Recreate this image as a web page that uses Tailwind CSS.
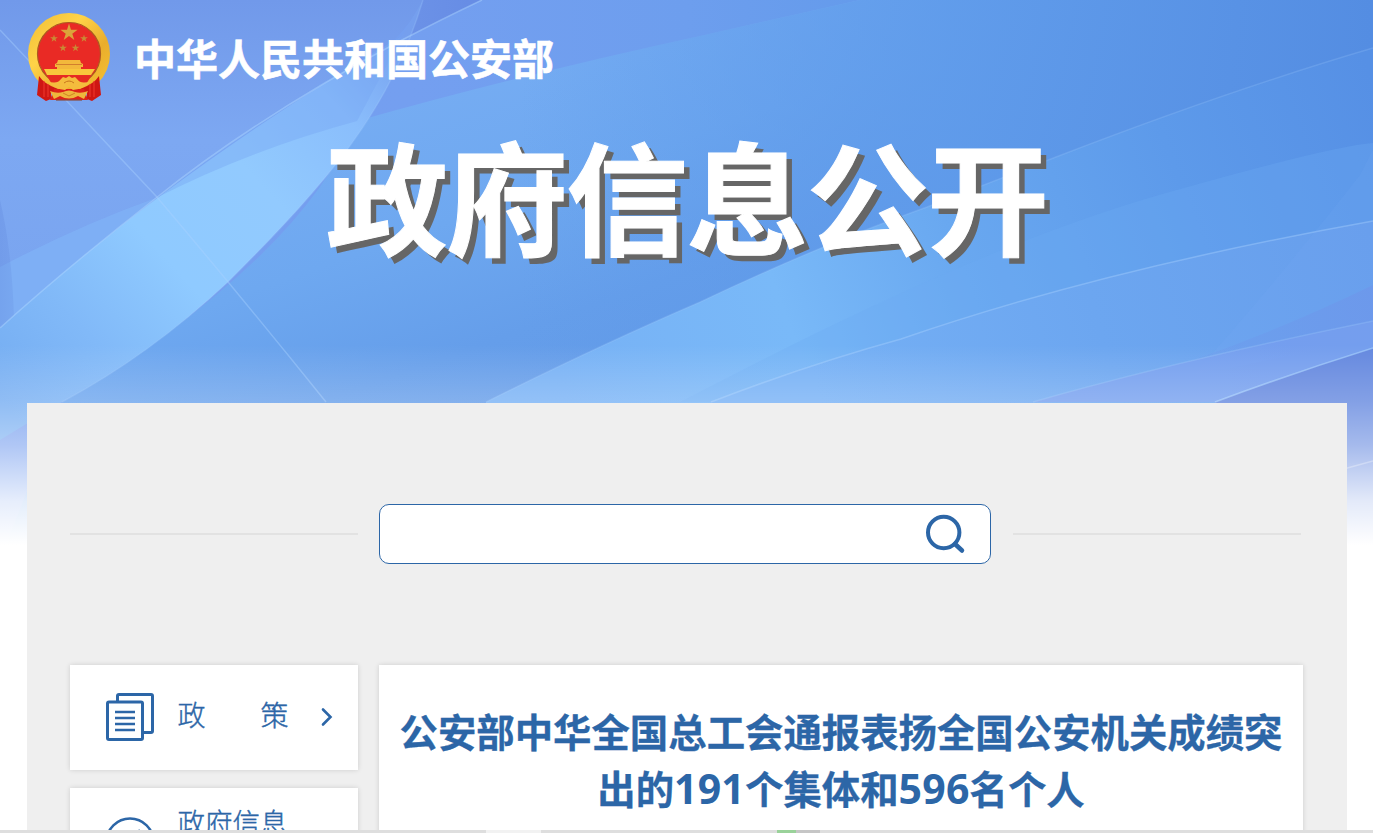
<!DOCTYPE html>
<html lang="zh-CN">
<head>
<meta charset="utf-8">
<title>政府信息公开</title>
<script src="https://cdn.jsdelivr.net/npm/@tailwindcss/browser@4"></script>
</head>
<body class="bg-white">
<div class="relative isolate flex h-[833px] w-[1373px] flex-col overflow-hidden font-['Noto_Sans_CJK_SC',sans-serif]">

  <!-- banner artwork behind the page -->
  <svg class="absolute top-0 left-0 -z-10" width="1373" height="560" viewBox="0 0 1373 560" fill="none">
    <defs>
      <linearGradient id="base" x1="0" y1="0" x2="1373" y2="0" gradientUnits="userSpaceOnUse">
        <stop offset="0" stop-color="#769eee"/><stop offset=".3" stop-color="#749ff0"/><stop offset=".5" stop-color="#6d9eee"/><stop offset=".75" stop-color="#5c98e9"/><stop offset="1" stop-color="#538ce1"/>
      </linearGradient>
      <linearGradient id="beam" x1="0" y1="400" x2="400" y2="30" gradientUnits="userSpaceOnUse">
        <stop offset="0" stop-color="#74acf1"/><stop offset=".2" stop-color="#81b9f8"/><stop offset=".4" stop-color="#8fcaff"/><stop offset=".62" stop-color="#92cafe"/><stop offset=".82" stop-color="#8abefc"/><stop offset="1" stop-color="#759fee"/>
      </linearGradient>
      <linearGradient id="mid" x1="420" y1="60" x2="540" y2="400" gradientUnits="userSpaceOnUse">
        <stop offset="0" stop-color="#77adf3"/><stop offset=".45" stop-color="#6ea8f0"/><stop offset=".8" stop-color="#659eea"/><stop offset="1" stop-color="#639be8"/>
      </linearGradient>
      <linearGradient id="midx" x1="520" y1="0" x2="1373" y2="0" gradientUnits="userSpaceOnUse">
        <stop offset="0" stop-color="#5e9aea" stop-opacity="0"/><stop offset=".5" stop-color="#5e9aea" stop-opacity=".85"/><stop offset="1" stop-color="#548de2"/>
      </linearGradient>
      <linearGradient id="low" x1="560" y1="380" x2="1373" y2="80" gradientUnits="userSpaceOnUse">
        <stop offset="0" stop-color="#77b1f5"/><stop offset=".27" stop-color="#79b9f8"/><stop offset=".48" stop-color="#69a8f0"/><stop offset=".75" stop-color="#5d9aea"/><stop offset="1" stop-color="#5690e5"/>
      </linearGradient>
      <linearGradient id="low2" x1="820" y1="400" x2="1373" y2="240" gradientUnits="userSpaceOnUse">
        <stop offset="0" stop-color="#75b0f5"/><stop offset=".5" stop-color="#6ca6f0"/><stop offset="1" stop-color="#679eec"/>
      </linearGradient>
      <linearGradient id="left" x1="0" y1="0" x2="0" y2="400" gradientUnits="userSpaceOnUse">
        <stop offset="0" stop-color="#7199ea"/><stop offset=".35" stop-color="#7da8f2"/><stop offset="1" stop-color="#77a2ee"/>
      </linearGradient>
      <linearGradient id="edge" x1="0" y1="0" x2="40" y2="0" gradientUnits="userSpaceOnUse">
        <stop offset="0" stop-color="#6087dc" stop-opacity=".3"/><stop offset="1" stop-color="#6087dc" stop-opacity="0"/>
      </linearGradient>
      <linearGradient id="dark" x1="380" y1="0" x2="470" y2="0" gradientUnits="userSpaceOnUse">
        <stop offset="0" stop-color="#6e94e8"/><stop offset="1" stop-color="#678de5"/>
      </linearGradient>
      <linearGradient id="violet" x1="1130" y1="350" x2="1373" y2="300" gradientUnits="userSpaceOnUse">
        <stop offset="0" stop-color="#6b98eb" stop-opacity=".1"/><stop offset="1" stop-color="#6b96ea" stop-opacity=".9"/>
      </linearGradient>
      <linearGradient id="fade" x1="0" y1="345" x2="0" y2="545" gradientUnits="userSpaceOnUse">
        <stop offset="0" stop-color="#fff" stop-opacity="0"/><stop offset=".28" stop-color="#fff" stop-opacity=".2"/><stop offset=".5" stop-color="#fff" stop-opacity=".42"/><stop offset=".78" stop-color="#fff" stop-opacity=".82"/><stop offset="1" stop-color="#fff"/>
      </linearGradient>
    </defs>
    <rect width="1373" height="560" fill="url(#base)"/>
    <path d="M0 0H423Q395 60 290 107Q150 195 0 328Z" fill="url(#left)"/>
    <path d="M0 267Q80 225 156 198L0 328Z" fill="#80b1f6" fill-opacity=".8"/>
    <path d="M0 200Q12 250 14 318L0 328Z" fill="url(#edge)"/>
    <path d="M423 0H482L402 40Z" fill="url(#dark)"/>
    <path d="M357 121Q520 75 700 36L860 0H1373V560H0L62 402Q300 260 357 121Z" fill="url(#mid)"/>
    <path d="M357 121Q520 75 700 36L860 0H1373V560H0L62 402Q300 260 357 121Z" fill="url(#midx)"/>
    <path d="M0 328C130 210 260 120 402 36L423 0C390 110 330 180 228 282Q150 355 62 402L0 440Z" fill="url(#beam)"/>
    <path d="M156 198Q250 150 357 121L402 36Q260 115 156 198Z" fill="#76a4f2" fill-opacity=".4"/>
    <path d="M486 402Q600 345 700 302Q820 245 927 207L1056 157Q1230 90 1373 48V560H486Z" fill="url(#low)"/>
    <path d="M768 357Q1000 240 1166 193T1373 143V221Q1100 275 901 339L711 402H680Z" fill="#6dabf2" fill-opacity=".32"/>
    <path d="M711 402Q810 364 901 339Q1100 270 1373 221V560H711Z" fill="url(#low2)"/>
    <path d="M1193 360Q1280 330 1373 285V350L1215 402H1033Z" fill="url(#violet)"/>
    <path d="M1360 175Q1270 290 1193 375L1373 340V150Z" fill="#79aef5" fill-opacity=".12"/>
    <path d="M1033 402Q1180 360 1373 321V402Z" fill="#769fee" fill-opacity=".9"/>
    <path d="M1215 402Q1290 374 1373 348V560H1215Z" fill="#6488df"/>
    <g stroke="#a9d3ff" stroke-width="1.500">
      <path d="M482 0Q440 20 402 40Q260 115 156 198Q70 265 0 328" stroke-opacity=".5"/>
      <path d="M0 30Q80 115 156 196Q240 295 326 402" stroke-opacity=".4"/>
      <path d="M423 0C390 110 330 180 228 282Q150 355 62 402" stroke-opacity=".2"/>
      <path d="M486 402Q600 345 700 302Q820 245 927 207L1056 157Q1230 90 1373 48" stroke-opacity=".2"/>
      <path d="M711 402Q810 364 901 339Q1100 270 1373 221" stroke-opacity=".4"/>
      <path d="M1033 402Q1180 360 1373 321" stroke-opacity=".25"/>
      <path d="M1215 402Q1290 374 1373 348" stroke-opacity=".6"/>
      <path d="M1340 470L1373 461" stroke="#fff" stroke-opacity=".3"/>
    </g>
    <rect y="345" width="1373" height="215" fill="url(#fade)"/>
  </svg>

  <header class="flex h-[403px] flex-none flex-col">
    <div class="flex pt-3 pl-[27px]">
      <svg width="84" height="91" viewBox="0 0 84 91">
        <defs><linearGradient id="gold" x1="0" y1="0" x2="1" y2="1"><stop offset="0" stop-color="#efbd35"/><stop offset=".35" stop-color="#ffd348"/><stop offset=".65" stop-color="#e9ad2c"/><stop offset="1" stop-color="#f8c535"/></linearGradient></defs>
        <ellipse cx="42" cy="42" rx="41" ry="41" fill="url(#gold)"/>
        <ellipse cx="42" cy="42" rx="31.500" ry="31.500" fill="#e92a25" stroke="#ad5a20" stroke-width="1.200"/>
        <path d="M42 11.500l2 6.300h6.600l-5.300 3.900 2 6.300-5.300-3.900-5.300 3.900 2-6.300-5.300-3.900h6.600z" fill="#dba43a"/>
        <g fill="#c98a35">
          <path id="st" d="M27 22.500l.9 2.700h3l-2.400 1.700.9 2.800-2.400-1.700-2.400 1.700.9-2.800-2.400-1.700h3z"/>
          <use href="#st" x="30"/><use href="#st" x="9" y="9.500"/><use href="#st" x="21.500" y="9.500"/>
        </g>
        <path d="M31 48h22l1 3 2 1v3h-2v2H30v-2h-2v-3l2-1z" fill="#f3b83b"/>
        <path d="M29 52.500h26" stroke="#c9702a" stroke-width=".8"/>
        <path d="M17 57h51l-4 6H20z" fill="#f8c73c"/>
        <path d="M20 64h44l-6 10H26z" fill="#e52a21"/>
        <path d="M12 64Q17 72 31 77l-1 4-6-1v7l-5 2-9-6z" fill="#cf1713"/>
        <path d="M72 64Q67 72 53 77l1 4 6-1v7l5 2 9-6z" fill="#cf1713"/>
        <path d="M17 69v16M21 72v13M67 69v16M63 72v13" stroke="#ef3a2f" stroke-width="1"/>
        <path d="M27 77h30l4 11H23z" fill="#dd2119"/>
        <path d="M20 69q10 4 14-2l2-2 3 1 3-2 3 2 3-1 2 2q4 6 14 2-6 8-18 9l-4-3-4 3q-12-1-18-9z" fill="#f4bc3d"/>
        <path d="M37 71q5-4 10 0" fill="none" stroke="#c7751d" stroke-width="1"/>
        <path d="M23 79q7 3 13 1 6-3 12 0 6 2 13-1l-4 8-6-3q-9 5-18 0l-6 3z" fill="#eeb63c"/>
        <path d="M36 81l6 3 6-3" fill="none" stroke="#c7751d" stroke-width=".8"/>
        <path d="M29 88h26" stroke="#8c4a3c" stroke-width="1.200"/>
      </svg>
      <p class="mt-[15px] ml-[23px] text-[42px] leading-[60px] font-bold text-white [-webkit-text-stroke:0.6px_#fff]">中华人民共和国公安部</p>
    </div>
    <h1 class="text-center text-[122px] leading-[180px] font-bold tracking-[-1.800px] text-white [-webkit-text-stroke:1px_#fff] [text-shadow:6px_6px_0_#666]">政府信息公开</h1>
  </header>

  <main class="mx-auto flex w-[1320px] flex-1 flex-col bg-[#efefef] px-[43px] pt-[101px]">
    <div class="flex h-[60px] flex-none items-center">
      <div class="h-0.5 w-[288px] bg-[#e2e2e2]"></div>
      <div class="mx-[21px] flex h-[60px] w-[612px] items-center justify-end rounded-[10px] border border-[#2c66a7] bg-white pr-6">
        <svg width="42" height="42" viewBox="0 0 42 42" fill="none" stroke="#2c66a7" stroke-width="4"><circle cx="19.700" cy="19.500" r="15.700"/><path d="M31 31L38 37.500" stroke-width="4.500" stroke-linecap="round"/></svg>
      </div>
      <div class="ml-px h-0.5 w-[288px] bg-[#e2e2e2]"></div>
    </div>

    <div class="mt-[101px] flex gap-[21px] text-[#2c66a7]">
      <nav class="flex w-[288px] flex-col gap-[18px] text-[28px] font-light">
        <a class="flex h-[105px] items-center bg-white pb-0.5 pl-[35px] shadow-[0_0_5px_rgba(0,0,0,0.14)]">
          <svg width="50" height="50" viewBox="0 0 50 50" fill="none" stroke="#2c66a7" stroke-width="3"><path d="M12.500 9V4Q12.500 2.500 14 2.500H46Q47.500 2.500 47.500 4V39Q47.500 40.500 46 40.500H38"/><rect x="2.500" y="10" width="35" height="37.500" rx="1.500"/><path d="M10 20H30M10 26H30M10 32H30M10 38H30" stroke-width="2.500"/></svg>
          <span class="-mt-1.5 ml-[23px] flex w-[111px] justify-between [-webkit-text-stroke:0.4px_#2c66a7]"><span>政</span><span>策</span></span>
          <svg class="ml-[32px]" width="14" height="20" viewBox="0 0 14 20" fill="none" stroke="#2c66a7" stroke-width="2.600" stroke-linecap="round"><path d="M2 2.500L9.500 10L2 17.500"/></svg>
        </a>
        <a class="flex h-[105px] bg-white pl-[35px] shadow-[0_0_5px_rgba(0,0,0,0.14)]">
          <svg class="mt-[29px]" width="50" height="50" viewBox="0 0 50 50" fill="none" stroke="#2c66a7" stroke-width="2.500"><circle cx="25" cy="25" r="23.500"/><path d="M35 13L23 27"/></svg>
          <span class="mt-[12px] ml-[23px] w-[112px] text-[27.500px] leading-[42px] [-webkit-text-stroke:0.4px_#2c66a7]">政府信息</span>
        </a>
      </nav>
      <article class="h-[240px] w-[924px] bg-white pt-[37px] pl-px shadow-[0_0_5px_rgba(0,0,0,0.14)]">
        <h2 class="text-center text-[38.400px] leading-[57.600px] font-bold whitespace-nowrap [-webkit-text-stroke:0.3px_#2c66a7]">
          <span class="block h-[57px]">公安部中华全国总工会通报表扬全国公安机关成绩突</span>
          <span class="block h-[57px]">出的<span class="font-['Open_Sans',sans-serif] text-[41px] leading-none tracking-[0.200px] [-webkit-text-stroke:0px]">191</span>个集体和<span class="font-['Open_Sans',sans-serif] text-[41px] leading-none tracking-[0.200px] [-webkit-text-stroke:0px]">596</span>名个人</span>
        </h2>
      </article>
    </div>
  </main>

  <!-- strip over the bottom edge -->
  <div class="absolute bottom-0 left-0 flex h-[3px] w-full bg-[#dedede]">
    <div class="ml-[486px] w-[55px] bg-[#f2f2f2]"></div>
    <div class="ml-[236px] w-[19px] bg-[#9ad29a]"></div>
    <div class="w-[24px] bg-[#c6c6c6]"></div>
  </div>
</div>
</body>
</html>
